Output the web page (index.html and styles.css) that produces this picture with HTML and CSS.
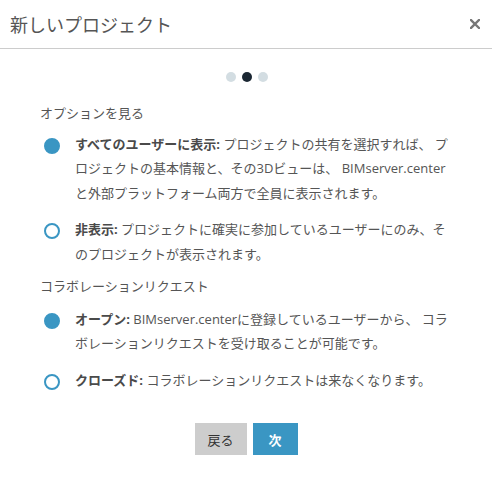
FILE: index.html
```html
<!DOCTYPE html>
<html lang="ja">
  <head>
    <meta charset="UTF-8" />
    <meta name="viewport" content="width=device-width, initial-scale=1.0" />
    <title>新しいプロジェクト</title>
    <link rel="stylesheet" href="styles.css">
  </head>
  <body>
    <div class="modal">
      <header class="modal-header">
        <h1>新しいプロジェクト</h1>
        <button class="close" aria-label="閉じる">
          <svg width="10" height="10" viewBox="0 0 10 10">
            <path d="M1 1 L9 9 M9 1 L1 9" stroke="#777" stroke-width="2.4" stroke-linecap="square" />
          </svg>
        </button>
      </header>

      <div class="steps">
        <span class="dot"></span>
        <span class="dot active"></span>
        <span class="dot"></span>
      </div>

      <main class="modal-body">
        <!-- Visibility -->
        <section class="group">
          <h2>オプションを見る</h2>
          <div class="option">
            <span class="radio checked"></span>
            <p><b>すべてのユーザーに表示:</b> プロジェクトの共有を選択すれば、 プロジェクトの基本情報と、その3Dビューは、 BIMserver.center と外部プラットフォーム両方で全員に表示されます。</p>
          </div>
          <div class="option">
            <span class="radio"></span>
            <p><b>非表示:</b> プロジェクトに確実に参加しているユーザーにのみ、そのプロジェクトが表示されます。</p>
          </div>
        </section>

        <!-- Collaboration -->
        <section class="group group-collab">
          <h2>コラボレーションリクエスト</h2>
          <div class="option">
            <span class="radio checked"></span>
            <p><b>オープン:</b> BIMserver.centerに登録しているユーザーから、 コラボレーションリクエストを受け取ることが可能です。</p>
          </div>
          <div class="option">
            <span class="radio"></span>
            <p><b>クローズド:</b> コラボレーションリクエストは来なくなります。</p>
          </div>
        </section>
      </main>

      <footer class="modal-footer">
        <button class="btn btn-back">戻る</button>
        <button class="btn btn-next">次</button>
      </footer>
    </div>
  </body>
</html>
```

FILE: styles.css
```css
/* Basic styling */
body {
  font-family: "Open Sans", "Noto Sans CJK JP", sans-serif;
  background-color: #fff;
  color: #555;
  margin: 0;
  padding: 0;
}

.modal-header {
  display: flex;
  align-items: center;
  justify-content: space-between;
  height: 48px;
  padding: 0 9px 0 10px;
  border-bottom: 1px solid #ccc;
}

.modal-header h1 {
  margin: 0;
  font-size: 18px;
  font-weight: normal;
  color: #555;
}

.close {
  background: none;
  border: none;
  padding: 0;
  width: 16px;
  height: 16px;
  display: flex;
  align-items: center;
  justify-content: center;
  cursor: pointer;
}

.steps {
  display: flex;
  justify-content: center;
  gap: 6px;
  margin-top: 23px;
  padding-left: 1px;
}

.dot {
  width: 10px;
  height: 10px;
  border-radius: 50%;
  background-color: #d3dde2;
}

.dot.active {
  background-color: #1b2733;
}

.modal-body {
  padding: 19px 40px 0 40px;
  font-size: 13px;
  line-height: 24.5px;
}

h2 {
  margin: 0 0 6px;
  font-size: 13px;
  font-weight: normal;
  color: #555;
}

.group-collab {
  margin-top: -4px;
}

.group-collab h2 {
  margin-bottom: 8px;
}

.option {
  display: flex;
  align-items: flex-start;
  gap: 15px;
  padding-left: 4px;
  margin-bottom: 12px;
}

.option p {
  margin: 0;
  width: 380px;
}

.option b {
  color: #4a4a4a;
  font-weight: bold;
}

.radio {
  flex: none;
  box-sizing: border-box;
  width: 16px;
  height: 16px;
  margin-top: 6px;
  border-radius: 50%;
  border: 2px solid #3a96c3;
  background-color: #fff;
}

.radio.checked {
  background-color: #3a96c3;
}

.modal-footer {
  display: flex;
  justify-content: center;
  gap: 6px;
  margin-top: 31px;
}

.btn {
  border: none;
  height: 32px;
  font-family: "Open Sans", "Noto Sans CJK JP", sans-serif;
  font-size: 13px;
  cursor: pointer;
}

.btn-back {
  width: 52px;
  background-color: #cdcdcd;
  color: #333;
}

.btn-next {
  width: 45px;
  background-color: #3a96c3;
  color: #fff;
  font-weight: bold;
}
```
